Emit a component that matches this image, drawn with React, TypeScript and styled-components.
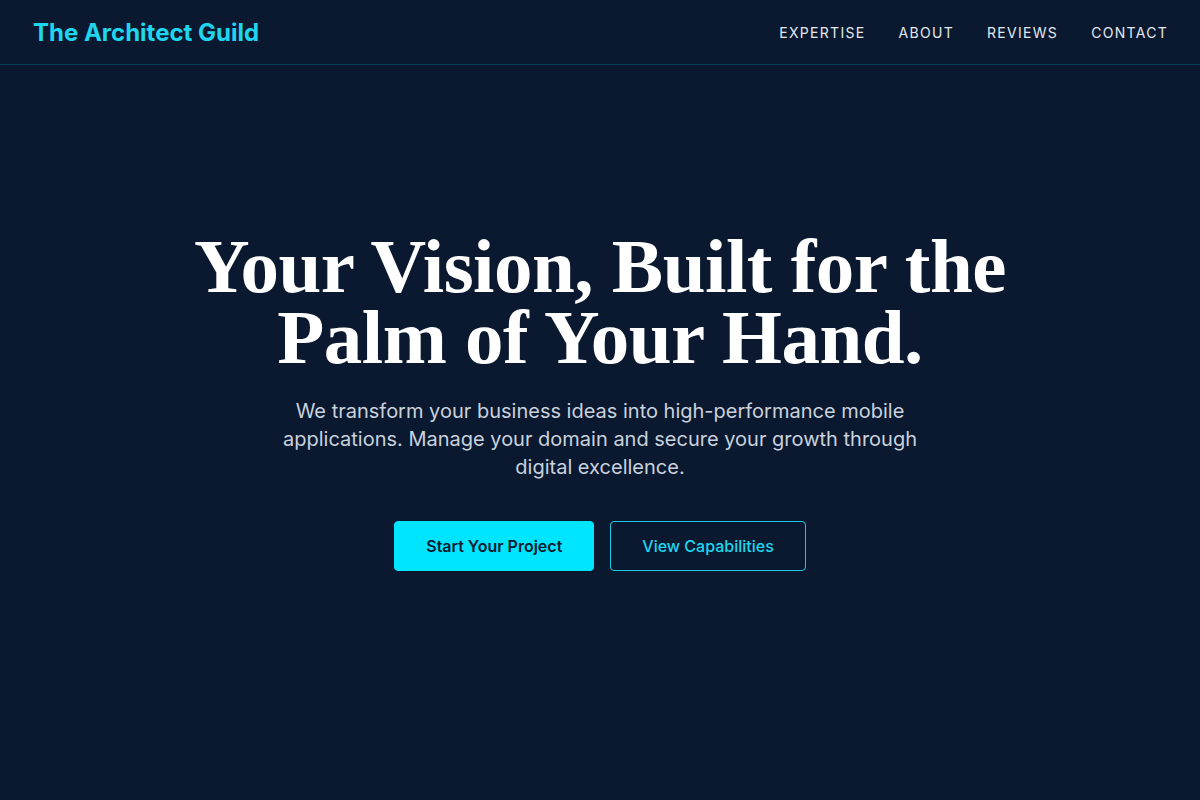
import React from "react";
import styled, { createGlobalStyle } from "styled-components";

const GlobalStyle = createGlobalStyle`
  * { box-sizing: border-box; }
  html, body { margin: 0; padding: 0; }
  body {
    background: #0a192f;
    font-family: Inter, "Noto Sans", sans-serif;
    color: #e6edf5;
  }
`;

const Page = styled.div`
  min-height: 800px;
  background: #0a192f;
  display: flex;
  flex-direction: column;
`;

const Header = styled.header`
  height: 65px;
  display: flex;
  align-items: center;
  justify-content: space-between;
  padding: 0 32px 0 33px;
  border-bottom: 1px solid rgba(0, 229, 255, 0.18);
`;

const Logo = styled.a`
  font-family: Inter, sans-serif;
  font-weight: 700;
  font-size: 24px;
  color: #1fd6ef;
  text-decoration: none;
  letter-spacing: 0;
`;

const Nav = styled.nav`
  display: flex;
  gap: 33px;
`;

const NavLink = styled.a`
  font-family: Inter, sans-serif;
  font-size: 14px;
  font-weight: 400;
  letter-spacing: 1.3px;
  color: #e3e9f1;
  text-decoration: none;
  text-transform: uppercase;
`;

const Hero = styled.main`
  display: flex;
  flex-direction: column;
  align-items: center;
  text-align: center;
  padding-top: 166px;
`;

const Title = styled.h1`
  margin: 0;
  font-family: "Liberation Serif", "DejaVu Serif", serif;
  font-weight: 700;
  font-size: 77px;
  line-height: 71px;
  color: #ffffff;
  letter-spacing: -0.5px;
  max-width: 860px;
`;

const Lead = styled.p`
  margin: 24px 0 0;
  max-width: 650px;
  font-family: Inter, sans-serif;
  font-size: 20px;
  line-height: 28px;
  color: #c9d2de;
`;

const Actions = styled.div`
  display: flex;
  gap: 16px;
  margin-top: 40px;
`;

const Button = styled.a<{ $variant: "solid" | "outline" }>`
  display: inline-flex;
  align-items: center;
  justify-content: center;
  height: 50px;
  padding: 0 31px;
  border-radius: 4px;
  font-family: Inter, sans-serif;
  font-size: 16px;
  text-decoration: none;
  font-weight: ${(p) => (p.$variant === "solid" ? 600 : 500)};
  background: ${(p) => (p.$variant === "solid" ? "#00e5ff" : "transparent")};
  color: ${(p) => (p.$variant === "solid" ? "#0a192f" : "#1fd6ef")};
  border: 1px solid ${(p) => (p.$variant === "solid" ? "#00e5ff" : "#1fc8e0")};
`;

export default function App() {
  return (
    <Page>
      <GlobalStyle />
      <Header>
        <Logo href="#">The Architect Guild</Logo>
        <Nav>
          <NavLink href="#">Expertise</NavLink>
          <NavLink href="#">About</NavLink>
          <NavLink href="#">Reviews</NavLink>
          <NavLink href="#">Contact</NavLink>
        </Nav>
      </Header>
      <Hero>
        <Title>
          Your Vision, Built for the
          <br />
          Palm of Your Hand.
        </Title>
        <Lead>
          We transform your business ideas into high-performance mobile
          applications. Manage your domain and secure your growth through
          digital excellence.
        </Lead>
        <Actions>
          <Button $variant="solid" href="#">Start Your Project</Button>
          <Button $variant="outline" href="#">View Capabilities</Button>
        </Actions>
      </Hero>
    </Page>
  );
}
